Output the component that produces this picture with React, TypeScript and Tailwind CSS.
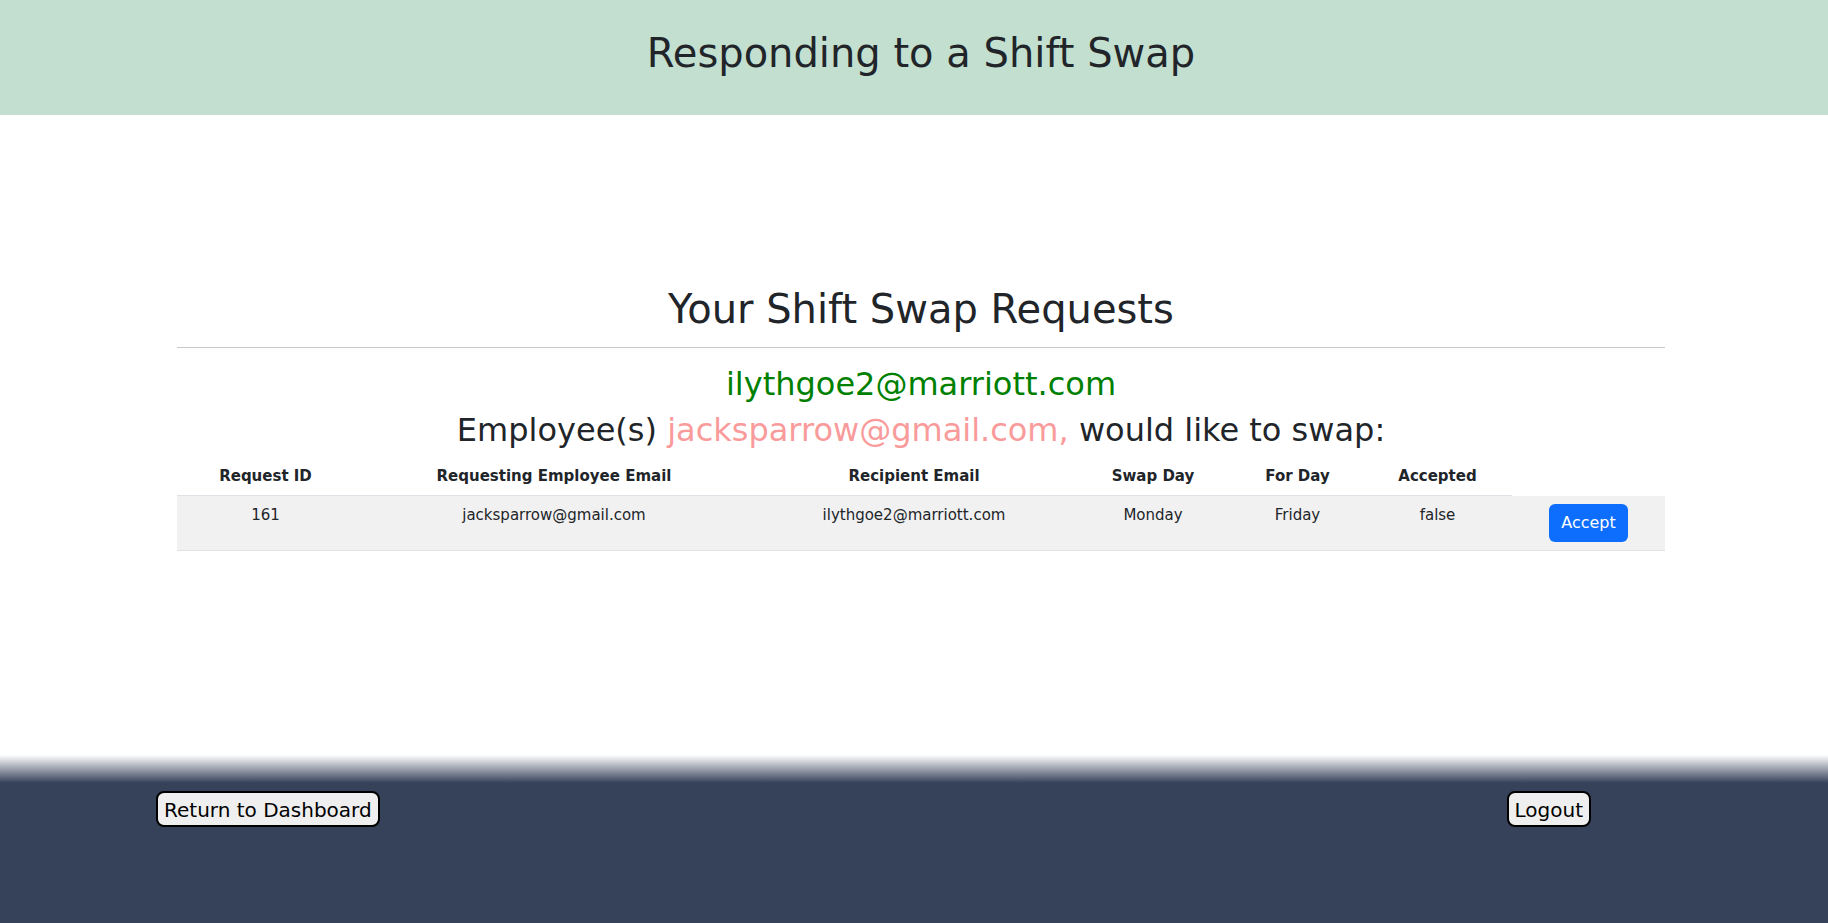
type SwapRequest = {
  id: number;
  requester: string;
  recipient: string;
  swapDay: string;
  forDay: string;
  accepted: boolean;
};

const currentUser = "ilythgoe2@marriott.com";

const requests: SwapRequest[] = [
  {
    id: 161,
    requester: "jacksparrow@gmail.com",
    recipient: currentUser,
    swapDay: "Monday",
    forDay: "Friday",
    accepted: false,
  },
];

const columns = [
  { label: "Request ID", width: "w-[177px]" },
  { label: "Requesting Employee Email", width: "w-auto" },
  { label: "Recipient Email", width: "w-[320px]" },
  { label: "Swap Day", width: "w-[158px]" },
  { label: "For Day", width: "w-[131px]" },
  { label: "Accepted", width: "w-[149px]" },
];

function RequestTable() {
  return (
    <table className="w-full table-fixed border-collapse text-center text-[15px] leading-[22px]">
      <thead>
        <tr>
          {columns.map((column) => (
            <th
              key={column.label}
              scope="col"
              className={`border-b border-[#dee2e6] p-2 font-bold ${column.width}`}
            >
              {column.label}
            </th>
          ))}
          <td className="w-[153px]" />
        </tr>
      </thead>
      <tbody>
        {requests.map((request) => (
          <tr key={request.id} className="border-b border-[#dee2e6] bg-[#f1f1f1] align-top">
            <td className="p-2">{request.id}</td>
            <td className="p-2">{request.requester}</td>
            <td className="p-2">{request.recipient}</td>
            <td className="p-2">{request.swapDay}</td>
            <td className="p-2">{request.forDay}</td>
            <td className="p-2">{String(request.accepted)}</td>
            <td className="p-2">
              <button
                type="button"
                className="rounded-md bg-[#0d6efd] px-3 py-[7px] text-base leading-6 text-white"
              >
                Accept
              </button>
            </td>
          </tr>
        ))}
      </tbody>
    </table>
  );
}

function FooterButton({ children }: { children: string }) {
  return (
    <button
      type="button"
      className="rounded-lg border-2 border-black bg-[#efefef] px-1.5 pt-[2px] text-xl leading-[30px] text-black"
    >
      {children}
    </button>
  );
}

export default function App() {
  return (
    <div className="flex min-h-screen flex-col bg-white font-[Verdana,'DejaVu_Sans',sans-serif] text-[#212529]">
      <header className="bg-[#c2dfd0] pt-[29px] pb-[38px] pl-3.5 text-center">
        <h1 className="text-[40px] leading-[48px]">Responding to a Shift Swap</h1>
      </header>

      <main className="mr-[163px] ml-[177px] grow pt-[170px] text-center">
        <h2 className="border-b border-[#c8c9ca] pb-[14px] text-[40px] leading-[48px]">
          Your Shift Swap Requests
        </h2>
        <div className="pt-[13px] pb-1 text-[32px] leading-[46px]">
          <p className="text-[#008000]">{currentUser}</p>
          <p>
            Employee(s){" "}
            <span className="text-[#f99b9b]">
              {requests.map((request) => `${request.requester},`).join(" ")}
            </span>{" "}
            would like to swap:
          </p>
        </div>
        <RequestTable />
      </main>

      <footer className="flex h-[168px] items-start justify-between bg-[linear-gradient(to_bottom,#ffffff,#36415a_28px)] pt-9 pr-[237px] pl-[156px]">
        <FooterButton>Return to Dashboard</FooterButton>
        <FooterButton>Logout</FooterButton>
      </footer>
    </div>
  );
}
